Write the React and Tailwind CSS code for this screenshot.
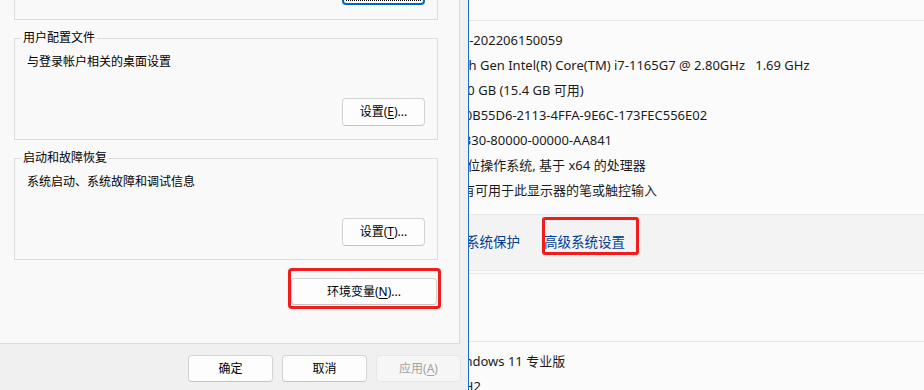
import React from 'react';

function Btn({ children, className = '' }) {
  return (
    <button className={`h-[28px] w-[83px] rounded-[4px] border border-[#d3d3d3] border-b-[#c4c4c4] bg-[#fdfdfd] text-[12px] leading-none text-black ${className}`}>
      {children}
    </button>
  );
}

function Key({ k }) {
  return <span className="underline underline-offset-2">{k}</span>;
}

function Group({ title, desc, btn }) {
  return (
    <fieldset className="border border-[#dcdcdc]">
      <legend className="ml-[6px] px-[2px] leading-[16px]">{title}</legend>
      <div className="px-[12px] pb-[13px]">
        <div className="mt-[8px] leading-[16px]">{desc}</div>
        <div className="mt-[28px] flex justify-end">
          <Btn>{btn}</Btn>
        </div>
      </div>
    </fieldset>
  );
}

export default function App() {
  const specs = [
    'WC-202206150059',
    '11th Gen Intel(R) Core(TM) i7-1165G7 @ 2.80GHz   1.69 GHz',
    '16.0 GB (15.4 GB 可用)',
    '6A0B55D6-2113-4FFA-9E6C-173FEC556E02',
    '00330-80000-00000-AA841',
    '64 位操作系统, 基于 x64 的处理器',
    '没有可用于此显示器的笔或触控输入',
  ];

  return (
    <div className="relative h-[390px] w-[924px] overflow-hidden bg-[#fbfbfb] font-['Noto_Sans','Noto_Sans_CJK_SC',sans-serif]">
      {/* settings window behind the dialog */}
      <div className="pt-[20px]">
        <div className="border-t border-[#e5e5e5]">
          <div className="pb-[11px] pl-[449px] pt-[7px] text-[13px] text-[#1b1b1b]">
            {specs.map((s, i) => (
              <div key={i} className="h-[25px] whitespace-pre leading-[25px]">{s}</div>
            ))}
          </div>
          <div className="flex h-[57px] items-center gap-[24px] border-t border-b border-[#e8e8e8] bg-[#f3f3f3] pl-[466px] text-[13.5px] text-[#003e92]">
            <span>系统保护</span>
            <span>高级系统设置</span>
          </div>
        </div>
        <div className="mt-[2px] border-t border-[#e8e8e8]">
          <div className="h-[68px] border-b border-[#e5e5e5]" />
          <div className="pl-[449px] pt-[7px] text-[13px] text-[#1b1b1b]">
            <div className="h-[25px] leading-[25px]">Windows 11 专业版</div>
            <div className="h-[25px] leading-[25px]">22H2</div>
          </div>
        </div>
      </div>

      {/* system properties dialog */}
      <div className="absolute left-0 top-0 flex h-[390px] w-[469px] flex-col border-r border-[#1a6cc4] bg-[#f0f0f0] text-[12px] text-black">
        <div className="h-[344px] w-[460px] border-b border-r border-[#dadada] bg-[#f9f9f9] pl-[14px] pr-[21px]">
          <div className="flex h-[20px] items-end justify-end border-x border-b border-[#dcdcdc] pb-[14px] pr-[12px]">
            <button className="h-[28px] w-[83px] shrink-0 rounded-[4px] border-2 border-[#0067c0] bg-[#fdfdfd] outline-1 outline-offset-[-5px] outline-dotted outline-black" />
          </div>
          <div className="mt-[10px]">
            <Group title="用户配置文件" desc="与登录帐户相关的桌面设置" btn={<>设置(<Key k="E" />)...</>} />
          </div>
          <div className="mt-[10px]">
            <Group title="启动和故障恢复" desc="系统启动、系统故障和调试信息" btn={<>设置(<Key k="T" />)...</>} />
          </div>
          <div className="mt-[18px] flex justify-end pr-[1px]">
            <Btn className="!h-[27px] !w-[146px]">环境变量(<Key k="N" />)...</Btn>
          </div>
        </div>
        <div className="flex justify-end gap-[9px] pr-[7px] pt-[11px]">
          <Btn className="!h-[27px] !w-[85px]">确定</Btn>
          <Btn className="!h-[27px] !w-[85px]">取消</Btn>
          <button className="h-[27px] w-[85px] rounded-[4px] border border-[#e6e6e6] bg-[#f6f6f6] text-[12px] leading-none text-[#a3a3a3]">
            应用(<Key k="A" />)
          </button>
        </div>
      </div>

      {/* red annotation boxes */}
      <div className="pointer-events-none absolute left-[288px] top-[268px] h-[41px] w-[153px] rounded-[4px] border-[3px] border-[#f21c1c]" />
      <div className="pointer-events-none absolute left-[542px] top-[217px] h-[38px] w-[97px] rounded-[3px] border-[3px] border-[#f21c1c]" />
    </div>
  );
}
